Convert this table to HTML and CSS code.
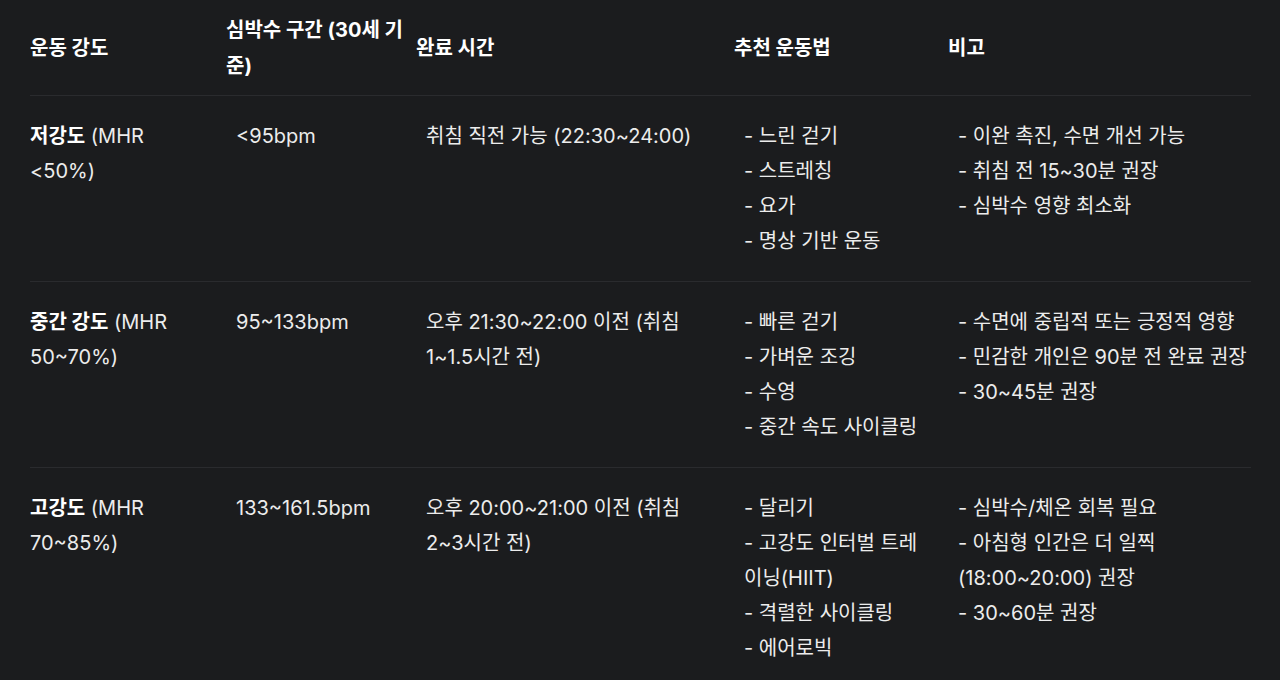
FILE: index.html
```html
<!DOCTYPE html>
<html lang="ko">
<head>
<meta charset="utf-8">
<link rel="stylesheet" href="styles.css">
</head>
<body>
<div class="wrap">
<table class="tbl">
  <colgroup>
    <col class="c1"><col class="c2"><col class="c3"><col class="c4"><col class="c5">
  </colgroup>
  <thead>
    <tr>
      <th>운동 강도</th>
      <th>심박수 구간 (30세 기준)</th>
      <th>완료 시간</th>
      <th>추천 운동법</th>
      <th>비고</th>
    </tr>
  </thead>
  <tbody>
    <tr>
      <td><strong>저강도</strong> (MHR &lt;50%)</td>
      <td>&lt;95bpm</td>
      <td>취침 직전 가능 (22:30~24:00)</td>
      <td>- 느린 걷기<br>- 스트레칭<br>- 요가<br>- 명상 기반 운동</td>
      <td>- 이완 촉진, 수면 개선 가능<br>- 취침 전 15~30분 권장<br>- 심박수 영향 최소화</td>
    </tr>
    <tr>
      <td><strong>중간 강도</strong> (MHR 50~70%)</td>
      <td>95~133bpm</td>
      <td>오후 21:30~22:00 이전 (취침 1~1.5시간 전)</td>
      <td>- 빠른 걷기<br>- 가벼운 조깅<br>- 수영<br>- 중간 속도 사이클링</td>
      <td>- 수면에 중립적 또는 긍정적 영향<br>- 민감한 개인은 90분 전 완료 권장<br>- 30~45분 권장</td>
    </tr>
    <tr>
      <td><strong>고강도</strong> (MHR 70~85%)</td>
      <td>133~161.5bpm</td>
      <td>오후 20:00~21:00 이전 (취침 2~3시간 전)</td>
      <td>- 달리기<br>- 고강도 인터벌 트레이닝(HIIT)<br>- 격렬한 사이클링<br>- 에어로빅</td>
      <td>- 심박수/체온 회복 필요<br>- 아침형 인간은 더 일찍 (18:00~20:00) 권장<br>- 30~60분 권장</td>
    </tr>
  </tbody>
</table>
</div>
</body>
</html>
```

FILE: styles.css
```css
html, body {
  margin: 0;
  padding: 0;
  background: #1b1c1e;
}
body {
  font-family: Inter, "Noto Sans CJK KR", sans-serif;
  color: #ececec;
  font-size: 20px;
}
.wrap {
  padding: 0 29px 0 30px;
}
.tbl {
  width: 100%;
  border-collapse: collapse;
  table-layout: fixed;
}
.c1 { width: 186px; }
.c2 { width: 190px; }
.c3 { width: 318px; }
.c4 { width: 214px; }
.c5 { width: auto; }
.tbl th {
  text-align: left;
  font-weight: 700;
  color: #ffffff;
  line-height: 36px;
  padding: 12px 0 11px 10px;
  vertical-align: middle;
  border-bottom: 1px solid #2a2b2e;
}
.tbl th:first-child { padding-left: 0; }
.tbl td {
  line-height: 35px;
  padding: 23px 10px 22px 20px;
  vertical-align: top;
  border-bottom: 1px solid #2a2b2e;
}
.tbl td:first-child { padding-left: 0; }
.tbl td:nth-child(3) { padding-right: 20px; }
.tbl td:last-child { padding-right: 0; }
.tbl strong {
  font-weight: 700;
  color: #ffffff;
}
```
